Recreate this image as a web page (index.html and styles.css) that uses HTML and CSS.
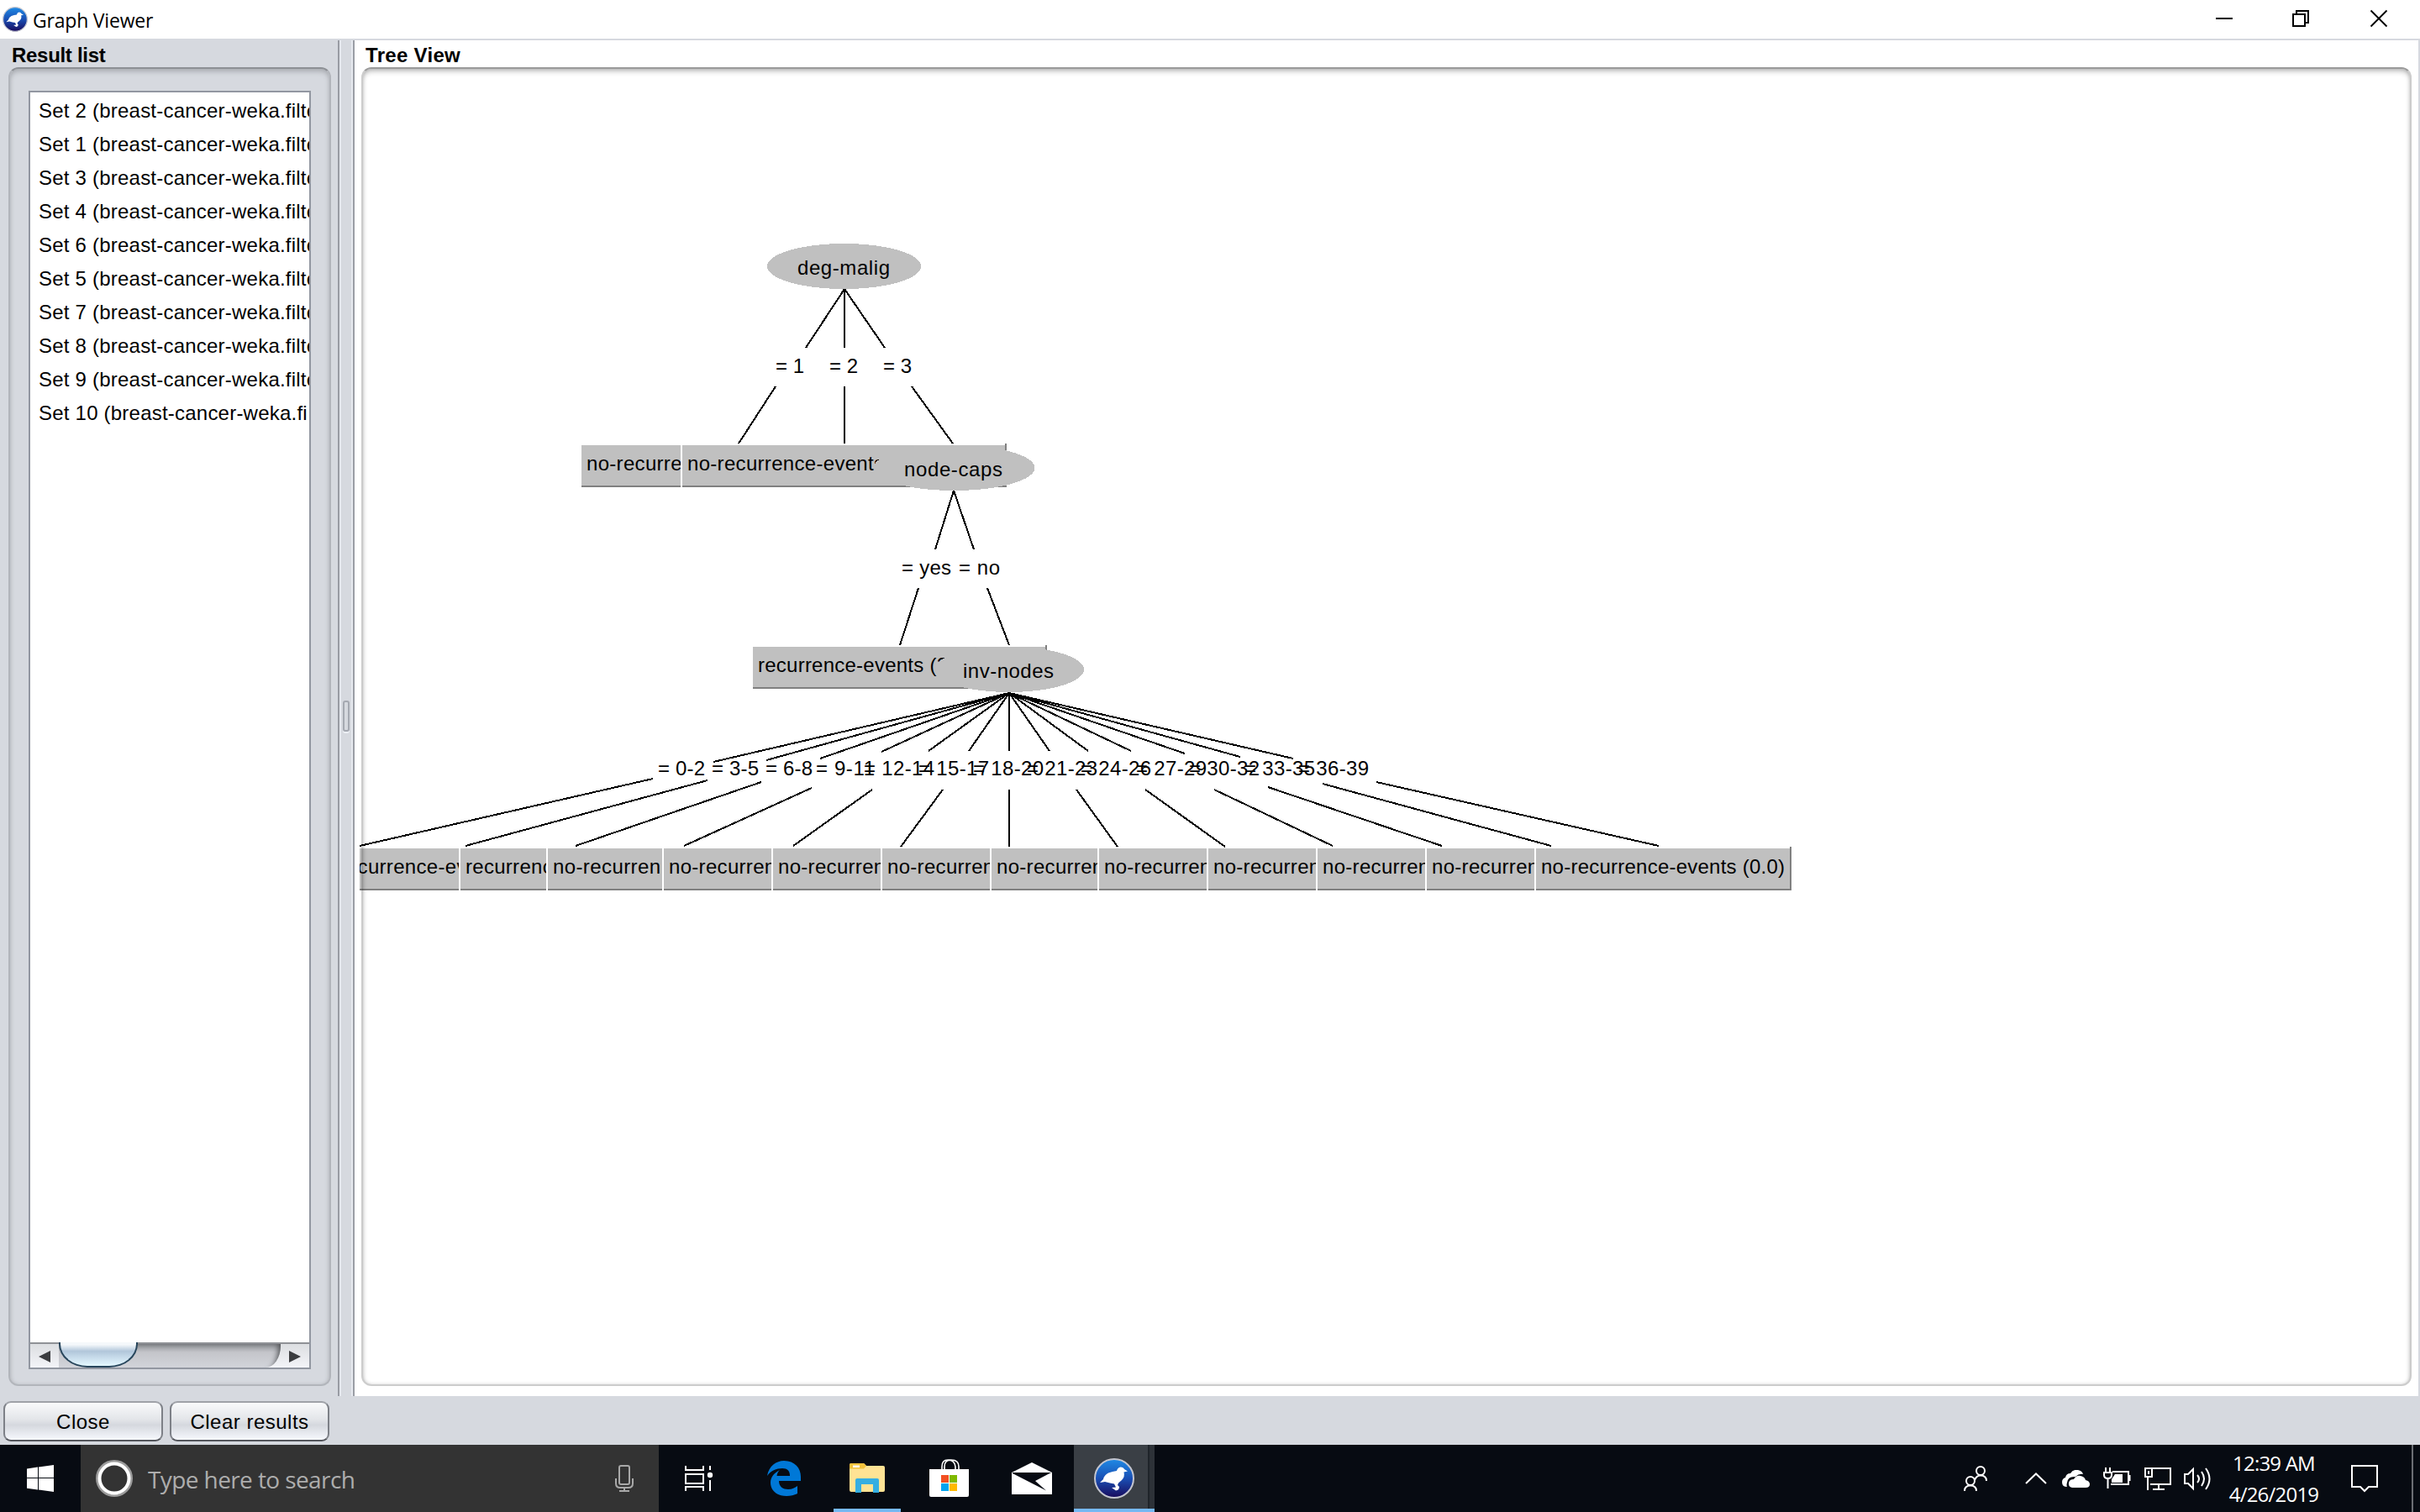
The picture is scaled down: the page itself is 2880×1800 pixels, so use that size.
FILE: index.html
```html
<!DOCTYPE html>
<html lang="en">
<head>
<meta charset="utf-8">
<title>Graph Viewer</title>
<link rel="stylesheet" href="styles.css">
</head>
<body>
<svg width="0" height="0" class="defs">
  <defs>
    <linearGradient id="blue" x1="0" y1="0" x2="0" y2="1"><stop offset="0" stop-color="#1f8be6"/><stop offset=".5" stop-color="#1a4fb4"/><stop offset="1" stop-color="#180a5c"/></linearGradient>
    <symbol id="weka" viewBox="0 0 48 48">
      <circle cx="24" cy="24" r="23" fill="url(#blue)" stroke="#c3c5cf" stroke-width="2"/>
      <path d="M7 29L11 25Q12 20 17 17.500Q22 15.500 27 15Q28 11 31.500 10.500Q35 10.500 36 13L40 15.500L35.500 16.500Q37 22 33 26L29 29.500L28 32L30 34Q30 38 26 38.500L21 35L26 34.500L24 30.500L19 29.500L13 28Z" fill="#fff"/>
    </symbol>
  </defs>
</svg>
<header class="titlebar">
  <svg class="app-icon" width="30" height="30"><use href="#weka"/></svg>
  <span class="title">Graph Viewer</span>
  <svg class="controls" width="206" height="22" viewBox="0 0 206 22" fill="none" stroke="#000" stroke-width="2">
    <path d="M1 11H21"/>
    <path d="M93 6H107V20H93ZM97 6V2H111V16H107"/>
    <path d="M185.500 1.500L204.500 20.500M204.500 1.500L185.500 20.500" stroke-width="1.800"/>
  </svg>
</header>
<main class="workspace">
  <section class="results">
    <h2>Result list</h2>
    <div class="group">
      <div class="list-box">
        <ul>
          <li>Set 2 (breast-cancer-weka.filters</li>
          <li>Set 1 (breast-cancer-weka.filters</li>
          <li>Set 3 (breast-cancer-weka.filters</li>
          <li>Set 4 (breast-cancer-weka.filters</li>
          <li>Set 6 (breast-cancer-weka.filters</li>
          <li>Set 5 (breast-cancer-weka.filters</li>
          <li>Set 7 (breast-cancer-weka.filters</li>
          <li>Set 8 (breast-cancer-weka.filters</li>
          <li>Set 9 (breast-cancer-weka.filters</li>
          <li>Set 10 (breast-cancer-weka.fi</li>
        </ul>
        <div class="scrollbar">
          <svg width="34" height="30"><path d="M10 15L24 8V22Z" fill="#3c3d40"/></svg>
          <div class="track"><div class="thumb"></div></div>
          <svg width="34" height="30"><path d="M24 15L10 8V22Z" fill="#3c3d40"/></svg>
        </div>
      </div>
    </div>
  </section>
  <div class="divider"><span class="grip"></span></div>
  <section class="tree">
    <h2>Tree View</h2>
    <div class="canvas">
      <svg width="2442" height="1570" viewBox="428 80 2442 1570">
        <g class="edges">
          <path d="M1005 344L959 414M1005 344V414M1005 344L1053 414M923 460L879 528M1005 460V528M1085 460L1134 528"/>
          <path d="M1135 584L1113 654M1135 584L1159 654M1093 700L1071 768M1175 700L1201 768"/>
          <path d="M1201 825L849 907M1201 825L912 905M1201 825L976 903M1201 825L1049 895M1201 825L1105 894M1201 825L1153 894M1201 825V894M1201 825L1249 894M1201 825L1295 894M1201 825L1346 894M1201 825L1410 897M1201 825L1476 901M1201 825L1539 903"/>
          <path d="M777 927L428 1007M842 929L554 1007M906 931L685 1007M966 938L814 1007M1038 940L944 1007M1122 940L1072 1008M1201 940V1008M1281 940L1330 1008M1363 940L1458 1008M1445 940L1586 1007M1509 937L1716 1007M1574 933L1846 1007M1638 931L1974 1007"/>
        </g>
        <g class="text">
          <text x="923" y="444" textLength="34">= 1</text>
          <text x="987" y="444" textLength="34">= 2</text>
          <text x="1051" y="444" textLength="34">= 3</text>
          <text x="1073" y="684" textLength="59">= yes</text>
          <text x="1141" y="684" textLength="49">= no</text>
          <text x="783" y="923" textLength="56">= 0-2</text>
          <text x="847" y="923" textLength="56">= 3-5</text>
          <text x="911" y="923" textLength="56">= 6-8</text>
          <text x="971" y="923" textLength="70">= 9-11</text>
          <text x="1028" y="923" textLength="84">= 12-14</text>
          <text x="1093" y="923" textLength="84">= 15-17</text>
          <text x="1158" y="923" textLength="84">= 18-20</text>
          <text x="1222" y="923" textLength="84">= 21-23</text>
          <text x="1286" y="923" textLength="84">= 24-26</text>
          <text x="1352" y="923" textLength="84">= 27-29</text>
          <text x="1415" y="923" textLength="84">= 30-32</text>
          <text x="1481" y="923" textLength="84">= 33-35</text>
          <text x="1545" y="923" textLength="84">= 36-39</text>
        </g>
        <g class="nodes text">
          <ellipse cx="1004.500" cy="317" rx="91.500" ry="27"/>
          <text x="949" y="327" textLength="110">deg-malig</text>
          <path d="M692 530H850V580H692Z"/><path class="shade" d="M692 579H850"/>
          <text x="698" y="560" textLength="234">no-recurrence-events</text>
          <path d="M812 530H1196V580H812Z"/><path class="gap" d="M811 530V580"/><path class="shade" d="M812 579H1197V528"/>
          <text x="818" y="560" textLength="234">no-recurrence-events</text>
          <ellipse cx="1135.500" cy="557" rx="96" ry="27"/>
          <text x="1076" y="567" textLength="117">node-caps</text>
          <path d="M896 770H1244V820H896Z"/><path class="shade" d="M896 819H1245V768"/>
          <text x="902" y="800" textLength="226">recurrence-events (2</text>
          <ellipse cx="1201" cy="797" rx="89" ry="27"/>
          <text x="1146" y="807" textLength="108">inv-nodes</text>
          <path d="M428 1010H2130V1060H428Z"/><path class="shade" d="M428 1059H2131V1008"/>
          <text x="368" y="1040" textLength="234">no-recurrence-events</text>
          <path d="M548 1010H700V1058H548Z"/><path class="gap" d="M547 1010V1060"/>
          <text x="554" y="1040" textLength="198">recurrence-events</text>
          <path d="M652 1010H830V1058H652Z"/><path class="gap" d="M651 1010V1060"/>
          <text x="658" y="1040" textLength="128">no-recurren</text>
          <path d="M790 1010H960V1058H790Z"/><path class="gap" d="M789 1010V1060"/>
          <text x="796" y="1040" textLength="234">no-recurrence-events</text>
          <path d="M920 1010H1100V1058H920Z"/><path class="gap" d="M919 1010V1060"/>
          <text x="926" y="1040" textLength="234">no-recurrence-events</text>
          <path d="M1050 1010H1240V1058H1050Z"/><path class="gap" d="M1049 1010V1060"/>
          <text x="1056" y="1040" textLength="234">no-recurrence-events</text>
          <path d="M1180 1010H1360V1058H1180Z"/><path class="gap" d="M1179 1010V1060"/>
          <text x="1186" y="1040" textLength="234">no-recurrence-events</text>
          <path d="M1308 1010H1500V1058H1308Z"/><path class="gap" d="M1307 1010V1060"/>
          <text x="1314" y="1040" textLength="234">no-recurrence-events</text>
          <path d="M1438 1010H1630V1058H1438Z"/><path class="gap" d="M1437 1010V1060"/>
          <text x="1444" y="1040" textLength="234">no-recurrence-events</text>
          <path d="M1568 1010H1760V1058H1568Z"/><path class="gap" d="M1567 1010V1060"/>
          <text x="1574" y="1040" textLength="234">no-recurrence-events</text>
          <path d="M1698 1010H1890V1058H1698Z"/><path class="gap" d="M1697 1010V1060"/>
          <text x="1704" y="1040" textLength="234">no-recurrence-events</text>
          <path d="M1828 1010H2130V1058H1828Z"/><path class="gap" d="M1827 1010V1060"/>
          <text x="1834" y="1040" textLength="290">no-recurrence-events (0.0)</text>
        </g>
      </svg>
    </div>
  </section>
</main>
<div class="actions">
  <button>Close</button>
  <button>Clear results</button>
</div>
<footer class="taskbar">
  <div class="start"><svg width="32" height="32" fill="#fff"><path d="M0 4.500L13 2.600V15H0ZM14 2.400L32 0V15H14ZM0 16H13V29.500L0 27.700ZM14 16H32V32L14 29.600Z"/></svg></div>
  <div class="search">
    <svg width="44" height="44" fill="none"><circle cx="22" cy="22" r="20.500" stroke="#9b9b9b" stroke-width="3"/><circle cx="22" cy="22" r="17.500" stroke="#fff" stroke-width="4"/></svg>
    <span class="hint">Type here to search</span>
    <svg width="22" height="32" viewBox="0 0 22 32" fill="none" stroke="#a8a8a8" stroke-width="2"><rect x="5" y="1" width="12" height="22" rx="2"/><path d="M1 16V22Q1 27 6 27H16Q21 27 21 22V16M11 27V31M5 31H17"/></svg>
  </div>
  <div class="apps">
    <div class="app"><svg width="34" height="30" fill="none" stroke="#fff" stroke-width="2"><path d="M1 0V5H22V0M1 10H22V21H1ZM1 30V25H22V30M30 0V5M30 17V30"/><circle cx="30" cy="11" r="3.200" fill="#fff" stroke="none"/></svg></div>
    <div class="app"><svg width="40" height="42" viewBox="0 0 40 42" fill="#0078d7"><path d="M0 18C2 6 11 0 20 0C33 0 40 9 40 19V24H14C14 31 19 34 25 34C30 34 33 32 36 30V39C32 41 28 42 23 42C11 42 4 35 4 26C4 19 9 14 15 11C12 14 12 16 11.500 18H27C27 12 24 9 18 9C11 9 4 12 0 18Z"/></svg></div>
    <div class="app open"><svg width="42" height="36" viewBox="0 0 42 36"><path d="M0 2Q0 0 2 0H17L20 3H40Q42 3 42 5V32Q42 34 40 34H2Q0 34 0 32Z" fill="#ffe394"/><path d="M0 2Q0 0 2 0H17L20 3L17 6.500H0Z" fill="#f4c33c"/><path d="M4 2.500H12V5H4Z" fill="#fff"/><path d="M7 35V20Q7 18 9 18H33Q35 18 35 20V35H28V25H14V35Z" fill="#35aee2"/></svg></div>
    <div class="app"><svg width="47" height="46" viewBox="0 0 47 46"><path d="M15 14V9Q15 1 22 1Q30 1 31 9V14M18 14V9Q18 1 26 1Q35 1 35 9V14" fill="none" stroke="#fff" stroke-width="1.600"/><path d="M0 12H47V43Q47 45 45 45H2Q0 45 0 43Z" fill="#fff"/><path d="M14 19H23V28H14Z" fill="#f25022"/><path d="M24 19H33V28H24Z" fill="#7fba00"/><path d="M14 29H23V38H14Z" fill="#00a4ef"/><path d="M24 29H33V38H24Z" fill="#ffb900"/></svg></div>
    <div class="app"><svg width="48" height="38" viewBox="0 0 48 38"><path d="M0 12L24 0L48 12V38H0Z" fill="#fff"/><path d="M1 12H47L28 22L41 33.500L1 13Z" fill="#070a12"/></svg></div>
    <div class="app open active"><svg width="48" height="48"><use href="#weka"/></svg></div>
  </div>
  <div class="tray">
    <svg width="28" height="30" viewBox="0 0 28 30" fill="none" stroke="#fff" stroke-width="2"><circle cx="20" cy="6" r="5"/><circle cx="8" cy="18" r="5"/><path d="M13 17Q15 11.500 20 11.500Q27 11.500 27 18M1 30Q1 23.500 8 23.500Q15 23.500 15 30"/></svg>
    <svg class="up" width="26" height="14" fill="none" stroke="#fff" stroke-width="2"><path d="M1 13L13 1.500L25 13"/></svg>
    <svg class="cloud" width="33" height="21" viewBox="0 0 33 21" fill="#fff"><path d="M6 20Q0 20 0 14.500Q0 10 4 9Q5 4 10 4Q13 -1 19 0Q24 1 25 5Q20 4 16 8Q7 7 6 15Q5 18 6 20Z"/><path d="M12 21Q7 20 8 15Q9 11 14 11Q17 6 22 7Q27 8 28 12Q33 13 33 17Q33 21 28 21Z"/></svg>
    <svg class="batt" width="33" height="27" viewBox="0 0 33 27" fill="none" stroke="#fff" stroke-width="2"><path d="M11 5H30V20H9M31.500 9V16M3 0V5M8 0V5M1 6H10V9Q10 13 5.500 13Q1 13 1 9ZM5.500 13V25"/><path d="M14 8H23V18H10V14Z" fill="#fff" stroke="none"/></svg>
    <svg class="net" width="32" height="27" viewBox="0 0 32 27" fill="none" stroke="#fff" stroke-width="2"><path d="M9 1H31V20H7M1 1H9V11H1ZM4 11V27M17 20V26M10 26H24M5 4V8"/></svg>
    <svg class="vol" width="33" height="29" viewBox="0 0 33 29" fill="none" stroke="#fff" stroke-width="2"><path d="M1 9H5L11 3V26L5 20H1ZM16 10Q20 14.500 16 19M21 6Q27 14.500 21 23M26 2Q35 14.500 26 27"/></svg>
    <div class="clock"><span>12:39 AM</span><span>4/26/2019</span></div>
    <svg class="note" width="32" height="33" viewBox="0 0 32 33" fill="none" stroke="#fff" stroke-width="2"><path d="M1 1H31V26H21L16 31L11 26H1Z"/></svg>
    <span class="peek"></span>
  </div>
</footer>
</body>
</html>
```
FILE: styles.css
```css
* { box-sizing: border-box; }
body {
  margin: 0;
  width: 2880px;
  height: 1800px;
  overflow: hidden;
  display: flex;
  flex-direction: column;
  background: #d6d9df;
  color: #000;
  font: 24px/28px "Liberation Sans", Arial, sans-serif;
}
svg { display: block; flex: none; }
.defs { position: absolute; }

.titlebar {
  height: 46px;
  flex: none;
  display: flex;
  align-items: center;
  padding-left: 3px;
  background: #fff;
}
.title { margin-left: 6px; font-family: "Open Sans", sans-serif; font-size: 23px; letter-spacing: -0.2px; padding-top: 2px; }
.controls { margin-left: auto; margin-right: 38px; margin-bottom: 2px; }

.workspace { height: 1616px; flex: none; display: flex; padding: 2px 2px 0 0; }
h2 { margin: 0; height: 32px; font-size: 24px; line-height: 35px; font-weight: bold; letter-spacing: -0.3px; }
.results { width: 402px; padding-left: 10px; }
.results h2 { padding-left: 4px; }
.group {
  width: 384px;
  height: 1570px;
  padding: 28px 24px 20px;
  border: 2px solid #b2b5bb;
  border-top-color: #8d9095;
  border-radius: 12px;
  box-shadow: inset 0 4px 6px -1px #a9acb1, inset 0 0 4px #bfc2c8;
}
.list-box {
  width: 336px;
  height: 1522px;
  margin-left: -2px;
  margin-top: -2px;
  border: 2px solid #9297a1;
  background: #fff;
  display: flex;
  flex-direction: column;
}
ul { list-style: none; margin: 0; padding: 2px 0 0; flex: 1; overflow: hidden; }
li { height: 40px; padding-left: 10px; line-height: 39px; white-space: nowrap; letter-spacing: 0.22px; overflow: hidden; }
.scrollbar {
  height: 30px;
  display: flex;
  border-top: 2px solid #8f9196;
  background: linear-gradient(#dcdee1, #f3f4f8);
}
.track {
  flex: 1;
  border-radius: 0 0 18px 0 / 0 0 26px 0;
  background: linear-gradient(#8e9095, #c4c5ca 35%, #d2d4da);
  box-shadow: inset -8px 4px 6px -5px #55575a;
}
.thumb {
  width: 94px;
  height: 30px;
  margin-top: -2px;
  border: 2px solid #27455b;
  border-top: 0;
  border-radius: 0 0 34px 34px / 0 0 28px 28px;
  background: linear-gradient(#f5f8fb 10%, #b1c6da 38%, #c4d8e8 60%, #e4f8ff);
}

.divider {
  width: 20px;
  display: flex;
  align-items: center;
  justify-content: center;
  border-left: 2px solid #989ba3;
  border-right: 2px solid #9a9da5;
  box-shadow: inset 2px 0 #e6e9ef, inset -2px 0 #e6e9ef;
}
.grip { width: 8px; height: 37px; margin-bottom: 5px; border: 2px solid #a5a9b1; border-radius: 3px; box-shadow: 0 2px #edf0f5; }

.tree { width: 2456px; background: #fff; padding-left: 6px; }
.tree h2 { padding-left: 7px; letter-spacing: 0.3px; }
.canvas { position: relative; width: 2442px; height: 1570px; }
.canvas::after {
  content: "";
  position: absolute;
  inset: 0 0 0 2px;
  border: 2px solid rgba(0, 0, 0, 0.2);
  border-top-color: #9a9a9a;
  border-radius: 12px;
  box-shadow: inset 0 4px 6px -1px rgba(0, 0, 0, 0.24), inset 0 0 4px rgba(0, 0, 0, 0.15);
}
.edges { fill: none; stroke: #000; stroke-width: 2px; shape-rendering: crispEdges; }
.text text { fill: #000; font: 24px "Liberation Sans", Arial, sans-serif; }
.nodes { fill: #c0c0c0; shape-rendering: crispEdges; }
.shade { fill: none; stroke: #808080; stroke-width: 2px; }
.gap { stroke: #fff; stroke-width: 2px; }

.actions { height: 58px; flex: none; display: flex; gap: 8px; padding: 6px 4px; }
button {
  width: 190px;
  height: 48px;
  padding: 2px 0 0;
  border: 2px solid #7d8087;
  border-top-color: #9fa2a8;
  border-bottom-color: #54565c;
  border-radius: 9px;
  background: linear-gradient(#f9fafb, #e3e5e9 45%, #d5d8de 60%, #f6f8fd);
  color: #000;
  font: inherit;
  letter-spacing: 0.5px;
}

.taskbar { height: 80px; flex: none; display: flex; background: #070b12; color: #fff; font-family: "Open Sans", sans-serif; }
.start { width: 96px; display: flex; align-items: center; justify-content: center; }
.search { width: 688px; display: flex; align-items: center; padding: 0 30px 0 18px; background: #333; }
.hint { flex: 1; margin-left: 18px; padding-top: 2px; font-size: 28px; letter-spacing: -0.6px; color: #adadad; }
.apps { display: flex; }
.app { width: 98px; display: flex; align-items: center; justify-content: center; }
.app:nth-child(1) { width: 96px; }
.app:nth-child(2) { width: 106px; }
.app:nth-child(3) { width: 92px; }
.app:nth-child(4) { width: 102px; }
.app:nth-child(5) { width: 96px; }
.app.open { background: linear-gradient(#76b9f5, #76b9f5) center bottom / 80px 4px no-repeat; }
.app.open.active {
  width: 96px;
  margin-left: 2px;
  background: linear-gradient(#76b9f5, #76b9f5) left bottom / 96px 4px no-repeat, linear-gradient(90deg, #3a3f45 88px, #1f242a 88px, #1f242a 90px, #2d3238 90px);
}
.tray { margin-left: auto; display: flex; align-items: center; }
.up { margin-left: 45px; }
.cloud { margin-left: 18px; }
.batt { margin-left: 16px; }
.net { margin-left: 16px; }
.vol { margin-left: 15px; }
.clock { width: 122px; margin-left: 13px; display: flex; flex-direction: column; align-items: center; font-size: 24px; line-height: 37px; letter-spacing: -0.8px; white-space: nowrap; }
.note { margin-left: 31px; }
.peek { width: 10px; height: 80px; margin-left: 40px; border-left: 2px solid #6b6e73; }
```
